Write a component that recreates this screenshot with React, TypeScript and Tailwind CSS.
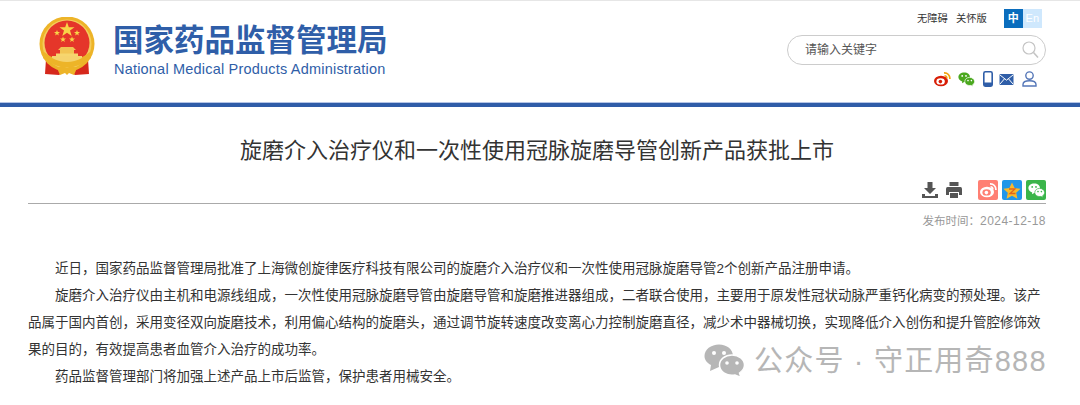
import React from "react";

const cjk = { fontFamily: '"Liberation Sans","Noto Sans CJK SC",sans-serif' };

function Emblem() {
  return (
    <svg width="57" height="60" viewBox="0 0 57 60">
      <path d="M7 42 L6 57 L20 58 L28 52 L36 58 L50 57 L49 42 Z" fill="#d6281c" />
      <circle cx="28" cy="27" r="27.5" fill="#edb428" />
      <circle cx="28" cy="27" r="24.5" fill="#f4cc5c" />
      <circle cx="28" cy="26" r="22.5" fill="#e5362a" />
      <path d="M5 35 Q28 53 51 35 L52 41 Q28 60 4 41 Z" fill="#edb428" />
      <path d="M13 39 H43 V41 Q28 49 13 41 Z" fill="#f5d36e" />
      <path d="M22 30 H34 L37 33 H35 V38 H21 V33 H19 Z" fill="#f2c453" />
      <rect x="17" y="36.5" width="22" height="2.5" fill="#f6d66e" />
      <path d="M18 51 L24 49 L28 51 L32 49 L38 51 L35 58 L30 56 L28 58 L26 56 L21 58 Z" fill="#edb428" />
      <polygon points="28,5 29.8,10.2 35.5,10.2 31,13.5 32.7,19 28,15.7 23.3,19 25,13.5 20.5,10.2 26.2,10.2" fill="#f8d548" />
      <polygon points="18,13 18.8,15 21,15 19.2,16.4 19.9,18.6 18,17.3 16.1,18.6 16.8,16.4 15,15 17.2,15" fill="#f8d548" />
      <polygon points="38,13 38.8,15 41,15 39.2,16.4 39.9,18.6 38,17.3 36.1,18.6 36.8,16.4 35,15 37.2,15" fill="#f8d548" />
      <polygon points="24,19.5 24.8,21.5 27,21.5 25.2,22.9 25.9,25.1 24,23.8 22.1,25.1 22.8,22.9 21,21.5 23.2,21.5" fill="#f8d548" />
      <polygon points="33,19.5 33.8,21.5 36,21.5 34.2,22.9 34.9,25.1 33,23.8 31.1,25.1 31.8,22.9 30,21.5 32.2,21.5" fill="#f8d548" />
    </svg>
  );
}

function Weibo({ bg }: { bg?: boolean }) {
  const body = bg ? "#fff" : "#d81e06";
  const eye = bg ? "#ff7f73" : "#fff";
  return (
    <svg width="17" height="16" viewBox="0 0 17 16">
      <ellipse cx="7" cy="10" rx="7" ry="5.2" fill={body} />
      <ellipse cx="6.6" cy="10.4" rx="4.2" ry="3.2" fill={eye} />
      <circle cx="6.4" cy="10.6" r="1.8" fill={body} />
      <path d="M10 1.8 A5.5 5.5 0 0 1 15.8 8" fill="none" stroke={bg ? "#fff" : "#f1a20d"} strokeWidth="1.7" />
      <path d="M10.5 4.8 A2.6 2.6 0 0 1 13 7.4" fill="none" stroke={bg ? "#fff" : "#f1a20d"} strokeWidth="1.4" />
    </svg>
  );
}

function WeChat({ c = "#4ba81f", eye = "#fff", w = 17, h = 15 }: { c?: string; eye?: string; w?: number; h?: number }) {
  return (
    <svg width={w} height={h} viewBox="0 0 17 15">
      <path d="M6.2 0.5 C9.6 0.5 12 2.6 12 5.2 C12 7.8 9.6 10 6.2 10 L4 11.2 L4.2 9.4 C2 8.6 0.4 7 0.4 5.2 C0.4 2.6 2.9 0.5 6.2 0.5 Z" fill={c} />
      <path d="M11.6 5.4 C14.4 5.4 16.6 7.2 16.6 9.4 C16.6 10.8 15.8 12 14.6 12.8 L15 14.6 L13 13.4 C9.8 14 6.8 12.2 6.8 9.4 C6.8 7.2 8.9 5.4 11.6 5.4 Z" fill={c} stroke={eye} strokeWidth="0.7" />
      <circle cx="4.2" cy="3.9" r="0.9" fill={eye} />
      <circle cx="8" cy="3.9" r="0.9" fill={eye} />
      <circle cx="10" cy="8.6" r="0.8" fill={eye} />
      <circle cx="13.4" cy="8.6" r="0.8" fill={eye} />
    </svg>
  );
}

export default function App() {
  return (
    <div className="w-[1080px] h-[405px] overflow-hidden bg-white relative" style={cjk}>
      <div className="h-[1px] bg-[#e6e6e6]" />
      <header className="h-[101px] flex justify-between pl-[39px] pr-[34px]">
        <div className="flex pt-[16px]">
          <Emblem />
          <div className="ml-[17px] pt-[5px]">
            <div className="text-[30.5px] leading-[36px] font-bold text-[#2f5ea8] whitespace-nowrap">国家药品监督管理局</div>
            <div className="text-[14.5px] leading-[16px] mt-[3px] ml-[1px] text-[#2f5ea8] tracking-[0.2px] whitespace-nowrap">National Medical Products Administration</div>
          </div>
        </div>
        <div className="w-[259px] pt-[8px] flex flex-col">
          <div className="flex items-center h-[19px] text-[10.3px] text-[#333]">
            <span className="ml-[130px]">无障碍</span>
            <span className="ml-[8px]">关怀版</span>
            <div className="ml-[17px] flex">
              <span className="w-[19px] h-[19px] bg-[#0a6dbd] text-white text-[11px] font-bold flex items-center justify-center">中</span>
              <span className="w-[19px] h-[19px] bg-[#cfe8fd] text-white text-[11px] flex items-center justify-center">En</span>
            </div>
            <div className="w-[4px]" />
          </div>
          <div className="mt-[7px] h-[30px] rounded-[15px] border border-[#cccccc] flex items-center justify-between pl-[17px] pr-[6px]">
            <span className="text-[12px] text-[#555]">请输入关键字</span>
            <svg width="17" height="18" viewBox="0 0 17 18" fill="none" stroke="#c4c4c4">
              <circle cx="7" cy="7" r="6" strokeWidth="1.2" />
              <path d="M11.5 11.5 L16 16.5" strokeWidth="1.6" />
            </svg>
          </div>
          <div className="mt-[6px] flex items-center justify-end gap-[6px] pr-[9px]">
            <Weibo />
            <div className="ml-[1px]"><WeChat /></div>
            <svg className="ml-[2px]" width="10" height="16" viewBox="0 0 10 16">
              <rect x="0.8" y="0.8" width="8.4" height="14.4" rx="1.6" fill="none" stroke="#2f5ea8" strokeWidth="1.6" />
              <rect x="0.8" y="11.5" width="8.4" height="3.7" fill="#2f5ea8" />
            </svg>
            <svg width="15" height="11" viewBox="0 0 14 11">
              <rect width="14" height="11" rx="1" fill="#2f5ea8" />
              <path d="M0.5 1 L7 6.2 L13.5 1 M0.5 10 L5 4.8 M13.5 10 L9 4.8" fill="none" stroke="#fff" strokeWidth="1" />
            </svg>
            <svg className="ml-[2px]" width="15" height="16" viewBox="0 0 15 16" fill="none" stroke="#5577b8" strokeWidth="1.4">
              <circle cx="7.5" cy="4.6" r="3.7" />
              <path d="M1 15 V13.5 C1 11 3 9.8 7.5 9.8 C12 9.8 14 11 14 13.5 V15 Z" />
            </svg>
          </div>
        </div>
      </header>
      <div className="h-[1px] bg-[#b4c4e6]" />
      <div className="h-[4px] bg-[#2f5ca8]" />
      <main className="pl-[28px] pr-[34px]">
        <h1 className="mt-[31px] text-[22px] leading-[26px] text-[#333] text-center font-normal">旋磨介入治疗仪和一次性使用冠脉旋磨导管创新产品获批上市</h1>
        <div className="mt-[14px] flex items-center justify-end h-[24px]">
          <svg width="16" height="16" viewBox="0 0 16 16" fill="#555">
            <path d="M5.5 0 H10.5 V6 H14 L8 12 L2 6 H5.5 Z" />
            <path d="M0 12 H3 V14 H13 V12 H16 V16 H0 Z" />
          </svg>
          <svg className="ml-[8px]" width="16" height="16" viewBox="0 0 16 16" fill="#555">
            <path d="M3.5 0 H12.5 V4 H3.5 Z" />
            <path d="M1.5 5 H14.5 Q16 5 16 7 V13 H13 V10 H3 V13 H0 V7 Q0 5 1.5 5 Z" />
            <rect x="4" y="11" width="8" height="5" />
          </svg>
          <span className="ml-[16px] w-[20px] h-[20px] rounded-[2px] bg-[#ff7f73] flex items-center justify-center"><Weibo bg /></span>
          <span className="ml-[4px] w-[20px] h-[20px] rounded-[2px] bg-[#2196e8] flex items-center justify-center">
            <svg width="18" height="17" viewBox="0 0 18 17">
              <polygon points="9,0.5 11.6,6 17.6,6.7 13.2,10.8 14.4,16.7 9,13.7 3.6,16.7 4.8,10.8 0.4,6.7 6.4,6" fill="#f7b92b" />
              <path d="M6 7 H12 L7 11.5 H12.5" fill="none" stroke="#e0651a" strokeWidth="1.3" />
            </svg>
          </span>
          <span className="ml-[4px] w-[20px] h-[20px] rounded-[2px] bg-[#3ab54a] flex items-center justify-center"><WeChat c="#fff" eye="#3ab54a" /></span>
        </div>
        <div className="mt-[1px] h-[1px] bg-[#aaaaaa]" />
        <div className="mt-[9px] leading-[14px] text-[#999] text-right">
          <span className="text-[11.5px]">发布时间：</span>
          <span className="text-[12px] tracking-[0.45px]">2024-12-18</span>
        </div>
        <div className="mt-[27px] text-[13.5px] leading-[27px] text-[#333]">
          <p className="indent-[27px]">近日，国家药品监督管理局批准了上海微创旋律医疗科技有限公司的旋磨介入治疗仪和一次性使用冠脉旋磨导管2个创新产品注册申请。</p>
          <p className="indent-[27px]">旋磨介入治疗仪由主机和电源线组成，一次性使用冠脉旋磨导管由旋磨导管和旋磨推进器组成，二者联合使用，主要用于原发性冠状动脉严重钙化病变的预处理。该产品属于国内首创，采用变径双向旋磨技术，利用偏心结构的旋磨头，通过调节旋转速度改变离心力控制旋磨直径，减少术中器械切换，实现降低介入创伤和提升管腔修饰效果的目的，有效提高患者血管介入治疗的成功率。</p>
          <p className="indent-[27px]">药品监督管理部门将加强上述产品上市后监管，保护患者用械安全。</p>
        </div>
      </main>
      <div className="absolute left-[704px] top-[344px] flex items-center">
        <svg width="41" height="34" viewBox="0 0 41 34">
          <path d="M15 0.5 C23 0.5 29 5.5 29 12 C29 18.5 23 23 15 23 L6 27 L7 21 C3 19 0.5 16 0.5 12 C0.5 5.5 7 0.5 15 0.5 Z" fill="#b6b6b6" />
          <path d="M28 11 C35 11 40.5 15.5 40.5 21 C40.5 24.5 38.5 27 35.5 29 L37 33.5 L31 31 C23 32.5 15.5 28 15.5 21 C15.5 15.5 21 11 28 11 Z" fill="#b6b6b6" stroke="#fff" strokeWidth="1.5" />
          <circle cx="10" cy="9" r="2" fill="#fff" />
          <circle cx="20" cy="9" r="2" fill="#fff" />
          <circle cx="23" cy="19" r="1.8" fill="#fff" />
          <circle cx="33" cy="19" r="1.8" fill="#fff" />
        </svg>
        <span className="ml-[9px] text-[29px] leading-[34px] text-[#b6b6b6] whitespace-nowrap tracking-[1.2px]">公众号 · 守正用奇888</span>
      </div>
    </div>
  );
}
